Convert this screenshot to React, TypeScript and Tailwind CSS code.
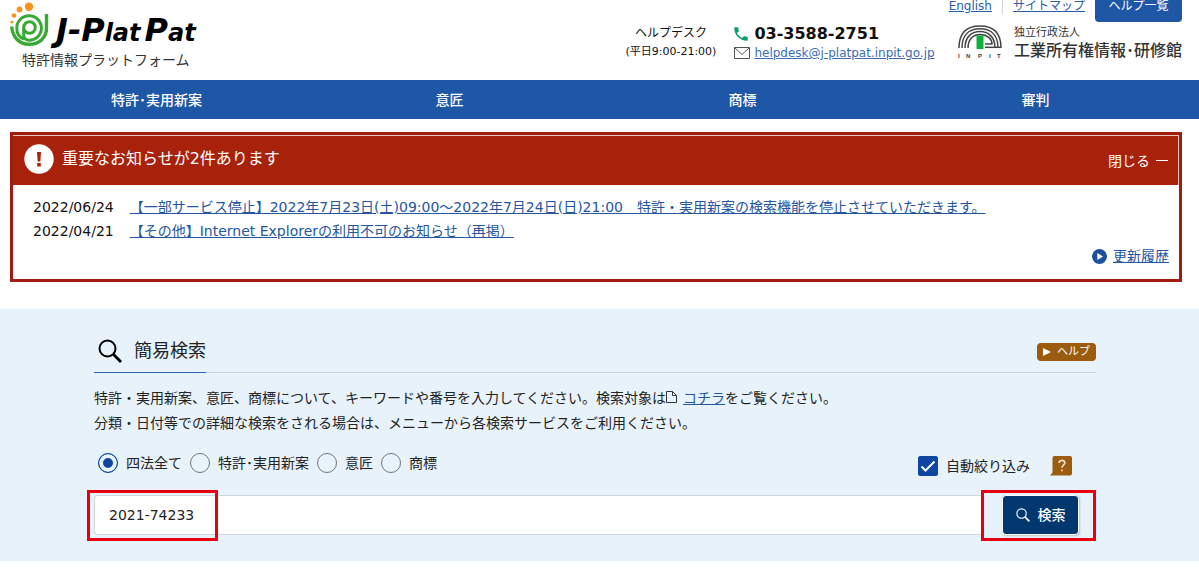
import React, { useState } from 'react';

const navItems = ['特許･実用新案', '意匠', '商標', '審判'];

const notices = [
    {
        date: '2022/06/24',
        text: '【一部サービス停止】2022年7月23日(土)09:00～2022年7月24日(日)21:00　特許・実用新案の検索機能を停止させていただきます。',
    },
    {
        date: '2022/04/21',
        text: '【その他】Internet Explorerの利用不可のお知らせ（再掲）',
    },
];

const searchTargets = ['四法全て', '特許･実用新案', '意匠', '商標'];

const PlatPatMark = () => (
    <svg className="h-[46px] w-[42px]" viewBox="0 0 42 46" fill="none" aria-hidden="true">
        <g fill="#f7931e">
            <circle cx="21" cy="6.800" r="4.200" />
            <circle cx="11.500" cy="9.500" r="2.900" />
            <circle cx="6" cy="15.500" r="2.300" />
            <circle cx="4" cy="22" r="1.600" />
        </g>
        <g stroke="#39a935">
            <path d="M38.500 14V28C38.500 38 31 44.300 21 44.300C11.500 44.300 4.500 37.500 3.700 26.500" strokeWidth="3.400" />
            <path d="M16 39C11 37.500 8.800 33 8.800 28A12.300 12.300 0 1 1 21 40.300C18 40.300 15.700 38.500 15.700 35V27.500" strokeWidth="3" />
            <circle cx="21.500" cy="27.500" r="5.800" strokeWidth="3" />
        </g>
    </svg>
);

const InpitMark = () => (
    <svg className="h-[34px] w-11" viewBox="0 0 44 34" fill="none" aria-label="INPIT">
        <g stroke="#444" strokeWidth="1.500">
            <path d="M1 23C1 8 9 1 22 1S43 8 43 23" />
            <path d="M4 23C4 10 11 3.800 22 3.800S40 10 40 23" />
            <path d="M7 23C7 12.500 13 6.600 22 6.600S37 12.500 37 23" />
            <path d="M10 23C10 15 14.500 9.400 22 9.400S34 14 34 19H27" />
            <path d="M27 22.300H43" />
        </g>
        <path d="M18.500 10.500H25.500V24H18.500Z" fill="#0faf3c" />
        <text y="33" fontSize="6" fontWeight="bold" fill="#444" fontFamily="Liberation Sans">
            <tspan x="0">I</tspan>
            <tspan x="8">N</tspan>
            <tspan x="20">P</tspan>
            <tspan x="31">I</tspan>
            <tspan x="39">T</tspan>
        </text>
    </svg>
);

const PhoneIcon = () => (
    <svg className="size-[18px]" viewBox="0 0 24 24" fill="#0a9f68" aria-hidden="true">
        <path d="M6.620 10.790c1.440 2.830 3.760 5.140 6.590 6.590l2.200-2.200c.27-.27.67-.36 1.020-.24 1.120.37 2.330.57 3.570.57.55 0 1 .45 1 1V20c0 .55-.45 1-1 1-9.390 0-17-7.610-17-17 0-.55.45-1 1-1h3.500c.55 0 1 .45 1 1 0 1.250.2 2.450.57 3.570.11.35.03.74-.25 1.020l-2.200 2.200z" />
    </svg>
);

const MailIcon = () => (
    <svg className="h-3 w-4" viewBox="0 0 16 12" fill="none" stroke="#555" aria-hidden="true">
        <path d="M.5.5h15v11H.5zM.5.5L8 7.500 15.500.5" />
    </svg>
);

const SearchIcon = ({ className, strokeWidth }: { className: string; strokeWidth: number }) => (
    <svg className={className} viewBox="0 0 24 24" fill="none" stroke="currentColor" strokeWidth={strokeWidth} aria-hidden="true">
        <circle cx="9.500" cy="9.500" r="8" />
        <path d="M15.300 15.300L23 23" strokeWidth={strokeWidth * 1.4} />
    </svg>
);

const Header = () => (
    <header className="flex h-20 justify-between pl-2 pr-[17px]">
        <div>
            <a href="#" className="flex h-12 text-black">
                <PlatPatMark />
                <span className="ml-1.5 flex items-baseline font-['DejaVu_Sans',sans-serif] text-2xl font-bold italic leading-[60px]">
                    <span className="text-[32px] leading-[60px]">J-P</span>lat
                    <span className="ml-1 text-[32px] leading-[60px]">P</span>at
                </span>
            </a>
            <p className="ml-3.5 text-sm leading-6 text-[#333]">特許情報プラットフォーム</p>
        </div>

        <div className="flex gap-3.5">
            <div className="flex gap-4 pt-6">
                <div className="text-center">
                    <p className="text-xs leading-[18px]">ヘルプデスク</p>
                    <p className="text-[11px] leading-5">(平日9:00-21:00)</p>
                </div>
                <div>
                    <p className="flex items-center gap-1 text-base font-bold leading-5">
                        <PhoneIcon />
                        03-3588-2751
                    </p>
                    <p className="flex items-center gap-1 pl-0.5 text-xs leading-[18px]">
                        <MailIcon />
                        <a href="mailto:helpdesk@j-platpat.inpit.go.jp" className="text-[#3c6cb0] underline">
                            helpdesk@j-platpat.inpit.go.jp
                        </a>
                    </p>
                </div>
            </div>

            <div>
                <div className="flex h-[22px] justify-end gap-2.5 text-xs leading-[13px]">
                    <a href="#" className="text-[#2a5ca8] underline">English</a>
                    <span className="h-3.5 w-px bg-gray-300" />
                    <a href="#" className="text-[#2a5ca8] underline">サイトマップ</a>
                    <button type="button" className="flex w-[87px] justify-center rounded-b bg-[#1f57a7] text-white">
                        ヘルプ一覧
                    </button>
                </div>
                <div className="flex justify-end gap-3 pt-[3px] text-[#333]">
                    <InpitMark />
                    <p>
                        <span className="block text-[11px] leading-4">独立行政法人</span>
                        <span className="block text-base font-medium leading-5">工業所有権情報･研修館</span>
                    </p>
                </div>
            </div>
        </div>
    </header>
);

const NoticeBox = () => (
    <section className="ml-2.5 mr-[17px] mt-[13px] border-[3px] border-[#a01c0c]">
        <div className="flex h-[50px] items-center gap-2 border-r border-t border-[#ecc4bc] bg-[#a8210b] pl-[11px] pr-2.5 text-white">
            <svg className="mb-1 size-[30px]" viewBox="0 0 30 30" aria-hidden="true">
                <circle cx="15" cy="15" r="14.700" fill="#fff" />
                <path d="M13 8h4l-.7 9.500h-2.600zM13.200 19h3.600v3.500h-3.600z" fill="#a8210b" />
            </svg>
            <h2 className="mb-1 flex-1 text-base leading-6">重要なお知らせが2件あります</h2>
            <button type="button" className="flex items-center gap-1.5 text-sm leading-6">
                閉じる
                <span className="h-px w-3 bg-white" />
            </button>
        </div>
        <div className="h-[94px] px-5 pt-2.5 text-sm leading-6">
            <ul>
                {notices.map((notice) => (
                    <li key={notice.date} className="flex gap-4">
                        <span>{notice.date}</span>
                        <a href="#" className="text-[#24569f] underline">{notice.text}</a>
                    </li>
                ))}
            </ul>
            <a href="#" className="-mr-2.5 mt-px flex items-center justify-end gap-1.5 text-[#24569f]">
                <svg className="size-[15px]" viewBox="0 0 15 15" aria-hidden="true">
                    <circle cx="7.500" cy="7.500" r="7.500" fill="#1c509f" />
                    <path d="M5.300 4L11 7.500 5.300 11z" fill="#fff" />
                </svg>
                <span className="underline">更新履歴</span>
            </a>
        </div>
    </section>
);

const SimpleSearch = () => {
    const [target, setTarget] = useState(searchTargets[0]);
    const [narrow, setNarrow] = useState(true);
    const [keyword, setKeyword] = useState('2021-74233');

    return (
        <section className="mt-[27px] bg-[#e7f2fb] pb-5 pl-[94px] pr-[103px] pt-[21px] text-sm text-[#222]">
            <div className="flex items-start justify-between border-b border-[#c8d3dd]">
                <h1 className="-mb-px flex h-[43px] items-center gap-3 border-b border-[#2f62ab] pl-1 text-lg leading-6">
                    <SearchIcon className="size-6 text-black" strokeWidth={2} />
                    簡易検索
                </h1>
                <button type="button" className="mt-[13px] flex h-[18px] items-center gap-1.5 rounded bg-[#9c5c10] px-1.5 text-[11px] leading-4 text-white">
                    <svg className="h-2 w-2" viewBox="0 0 8 8" aria-hidden="true">
                        <path d="M0 0l8 4-8 4z" fill="currentColor" />
                    </svg>
                    ヘルプ
                </button>
            </div>

            <p className="mt-[13px] leading-[25px]">
                特許・実用新案、意匠、商標について、キーワードや番号を入力してください。検索対象は
                <svg className="mb-1 mr-1.5 inline h-3 w-[11px]" viewBox="0 0 11 12" fill="none" stroke="#333" aria-hidden="true">
                    <path d="M.5.5h6l4 4v7H.5zM6.500.5v4h4" />
                </svg>
                <a href="#" className="text-[#24569f] underline">コチラ</a>をご覧ください。
                <br />
                分類・日付等での詳細な検索をされる場合は、メニューから各検索サービスをご利用ください。
            </p>

            <div className="mt-3 flex justify-between pl-1 pr-6 leading-5">
                <div className="flex gap-2 pt-[5px]">
                    {searchTargets.map((item) => (
                        <label key={item} className="flex items-start gap-2">
                            <input
                                type="radio"
                                name="target"
                                checked={target === item}
                                onChange={() => setTarget(item)}
                                className="size-5 appearance-none rounded-full border border-[#767676] bg-[#e9f3fb] checked:border-[#0d47a1] checked:bg-[#0d47a1] checked:shadow-[inset_0_0_0_4px_#e9f3fb]"
                            />
                            {item}
                        </label>
                    ))}
                </div>
                <div className="flex items-center gap-5 pt-2">
                    <label className="flex items-center gap-2">
                        <span className="grid">
                            <input
                                type="checkbox"
                                checked={narrow}
                                onChange={(e) => setNarrow(e.target.checked)}
                                className="peer col-start-1 row-start-1 size-5 appearance-none rounded-xs border border-[#767676] bg-white checked:border-[#0d47a1] checked:bg-[#0d47a1]"
                            />
                            <svg className="pointer-events-none invisible col-start-1 row-start-1 size-5 peer-checked:visible" viewBox="0 0 20 20" fill="none" stroke="#fff" strokeWidth="2" aria-hidden="true">
                                <path d="M3.500 10.500l4 4L16.500 5.500" />
                            </svg>
                        </span>
                        自動絞り込み
                    </label>
                    <button type="button" aria-label="ヘルプ">
                        <svg className="h-5 w-[22px]" viewBox="0 0 22 20" aria-hidden="true">
                            <path d="M4 0h16a2 2 0 0 1 2 2v15.500a2 2 0 0 1-2 2H0l2.500-3V2a2 2 0 0 1 2-2z" fill="#9c5c10" />
                            <path d="M9 7c0-3.400 5.800-3.400 5.800-.2 0 2.200-2.900 2.400-2.900 5M11.900 13.500v1.800" fill="none" stroke="#f5e6d2" strokeWidth="1.600" />
                        </svg>
                    </button>
                </div>
            </div>

            <form className="relative mt-3.5 flex items-center" onSubmit={(e) => e.preventDefault()}>
                <input
                    type="text"
                    aria-label="キーワード"
                    value={keyword}
                    onChange={(e) => setKeyword(e.target.value)}
                    className="mb-0.5 h-10 min-w-0 flex-1 rounded-l border border-r-0 border-[#cfd6dc] bg-white px-3.5 text-sm text-[#222]"
                />
                {/* highlight frame over the entered number */}
                <span className="pointer-events-none absolute -left-[7px] top-0 h-full w-[131px] border-[3px] border-[#e60012]" />
                <div className="flex h-[51px] w-[115px] items-center justify-end border-[3px] border-[#e60012] pb-0.5 pr-3.5">
                    <button type="submit" className="flex h-10 w-[77px] items-center justify-center gap-2 rounded border border-white bg-[#00376f] font-medium text-white shadow-[1px_1px_2px_#b8c4d0]">
                        <SearchIcon className="size-3.5" strokeWidth={2} />
                        検索
                    </button>
                </div>
            </form>
        </section>
    );
};

export default function App() {
    return (
        <div className="bg-white font-['DejaVu_Sans','Noto_Sans_CJK_JP',sans-serif] text-[#111]" lang="ja">
            <Header />
            <nav className="grid h-[39px] grid-cols-4 items-center bg-[#1f57a7] pl-2.5 pr-[17px] text-center text-sm font-medium text-white">
                {navItems.map((item) => (
                    <a key={item} href="#">{item}</a>
                ))}
            </nav>
            <NoticeBox />
            <SimpleSearch />
        </div>
    );
}
